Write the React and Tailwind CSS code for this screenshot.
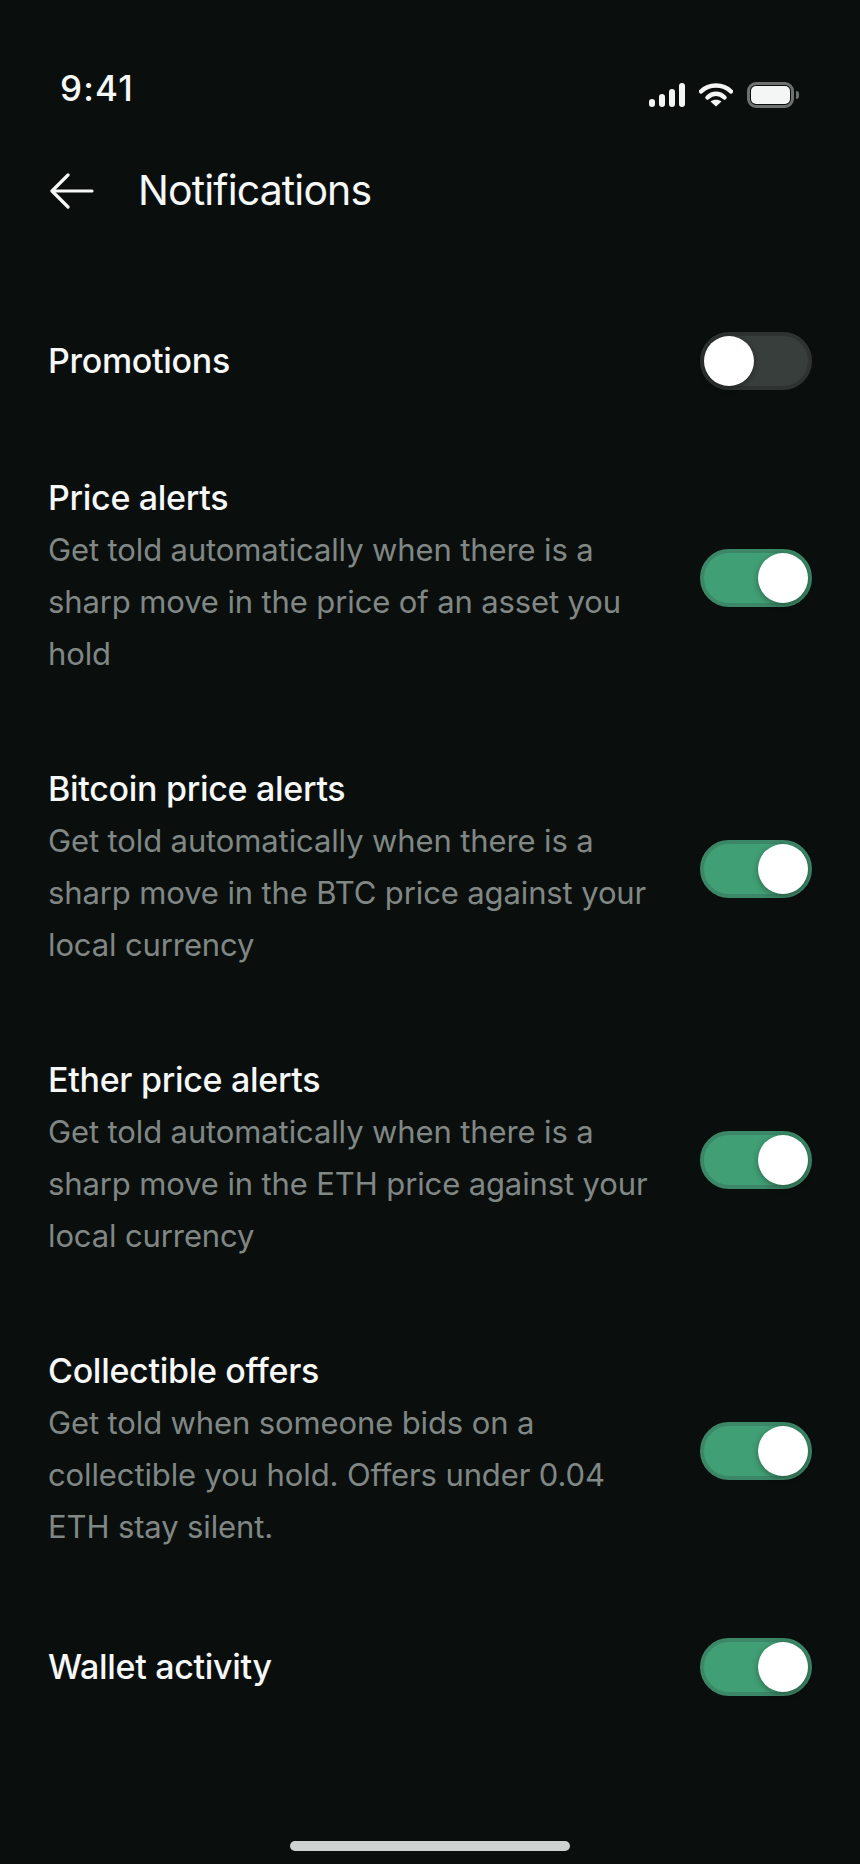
const rows = [
  { title: 'Promotions', on: false },
  {
    title: 'Price alerts',
    lines: ['Get told automatically when there is a', 'sharp move in the price of an asset you', 'hold'],
    on: true
  },
  {
    title: 'Bitcoin price alerts',
    lines: ['Get told automatically when there is a', 'sharp move in the BTC price against your', 'local currency'],
    on: true
  },
  {
    title: 'Ether price alerts',
    lines: ['Get told automatically when there is a', 'sharp move in the ETH price against your', 'local currency'],
    on: true
  },
  {
    title: 'Collectible offers',
    lines: ['Get told when someone bids on a', 'collectible you hold. Offers under 0.04', 'ETH stay silent.'],
    on: true
  },
  { title: 'Wallet activity', on: true }
]

function Toggle({ on, className }) {
  return (
    <div
      className={`flex h-[58px] w-[112px] shrink-0 items-center rounded-full border-[4px] ${className} ${
        on ? 'justify-end border-[#3b8767] bg-[#409f74]' : 'justify-start border-[#2e3332] bg-[#383e3c]'
      }`}
    >
      <div className="h-[50px] w-[50px] rounded-full bg-white shadow-[0_2px_6px_rgba(0,0,0,0.35)]" />
    </div>
  )
}

function StatusIcons() {
  return (
    <div className="flex items-center">
      <svg width="36" height="24" viewBox="0 0 36 24" fill="#f4f6f5">
        <rect x="0" y="16" width="6" height="8" rx="3" />
        <rect x="10" y="11" width="6" height="13" rx="3" />
        <rect x="20" y="6" width="6" height="18" rx="3" />
        <rect x="30" y="0" width="6" height="24" rx="3" />
      </svg>
      <svg className="ml-[14px]" width="34" height="24" viewBox="0 0 34 24" fill="none">
        <path d="M2 8.5C10 0.5 24 0.5 32 8.5" stroke="#f4f6f5" strokeWidth="4.5" strokeLinecap="round" />
        <path d="M8.5 14.5C13.5 9.5 20.5 9.5 25.5 14.5" stroke="#f4f6f5" strokeWidth="4.5" strokeLinecap="round" />
        <path d="M17 23.5L11.5 18.5C14.5 16 19.5 16 22.5 18.5Z" fill="#f4f6f5" />
      </svg>
      <div className="ml-[14px] flex h-[26px] w-[47px] items-center justify-center rounded-[9px] border-[3px] border-[#6d716f]">
        <div className="h-[18px] w-[39px] rounded-[5px] bg-[#f4f6f5]" />
      </div>
      <div className="ml-[2px] h-[8px] w-[3px] rounded-r-full bg-[#6d716f]" />
    </div>
  )
}

export default function App() {
  return (
    <div className="flex h-[1864px] w-[860px] flex-col bg-[#0a0f0e] font-['Inter',sans-serif] text-[#f6f8f7]">
      {/* Status bar */}
      <div className="flex items-start justify-between pl-[60px] pr-[61px] pt-[66px]">
        <span className="text-[35px] font-medium leading-[44px] tracking-[1.2px]">9:41</span>
        <div className="pt-[16px]">
          <StatusIcons />
        </div>
      </div>

      {/* Header */}
      <div className="mt-[55px] flex h-[52px] items-center pl-[50px]">
        <svg width="44" height="36" viewBox="0 0 44 36" fill="none" stroke="currentColor" strokeWidth="3.2" strokeLinecap="round" strokeLinejoin="round">
          <path d="M42 18H3" />
          <path d="M18 2L2 18L18 34" />
        </svg>
        <h1 className="ml-[44px] text-[41px] font-normal tracking-[-0.87px]">Notifications</h1>
      </div>

      {/* Settings */}
      <div className="mt-[115px] flex flex-col pl-[48px] pr-[48px]">
        {rows.map((row) => (
          <div
            key={row.title}
            className="mt-[83px] flex items-center justify-between first:mt-0 first:mb-[-1px] last:mt-[85px]"
          >
            <div>
              <p className="text-[34px] font-medium leading-[52px] tracking-[-0.3px]">{row.title}</p>
              {row.lines &&
                row.lines.map((line) => (
                  <p key={line} className="text-[31px] font-normal leading-[52px] tracking-[-0.12px] text-[#808785]">
                    {line}
                  </p>
                ))}
            </div>
            <Toggle on={row.on} className={row.lines ? 'mt-[4px]' : ''} />
          </div>
        ))}
      </div>

      {/* Home indicator */}
      <div className="mt-auto flex justify-center pb-[13px]">
        <div className="h-[10px] w-[280px] rounded-full bg-[#ced2d0]" />
      </div>
    </div>
  )
}
